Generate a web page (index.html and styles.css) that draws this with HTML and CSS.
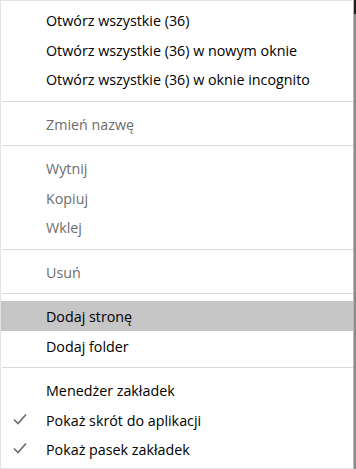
FILE: index.html
```html
<!DOCTYPE html>
<html lang="pl">

<head>
    <meta charset="UTF-8">
    <meta name="viewport" content="width=device-width, initial-scale=1.0">
    <title>Menu zakładek</title>
    <link rel="stylesheet" href="styles.css">
</head>

<body>
    <div class="menu">
        <div class="item">Otwórz wszystkie (36)</div>
        <div class="item">Otwórz wszystkie (36) w nowym oknie</div>
        <div class="item">Otwórz wszystkie (36) w oknie incognito</div>
        <div class="sep"></div>
        <div class="item disabled">Zmień nazwę</div>
        <div class="sep"></div>
        <div class="item disabled">Wytnij</div>
        <div class="item disabled">Kopiuj</div>
        <div class="item disabled">Wklej</div>
        <div class="sep"></div>
        <div class="item disabled">Usuń</div>
        <div class="sep"></div>
        <div class="item active">Dodaj stronę</div>
        <div class="item">Dodaj folder</div>
        <div class="sep"></div>
        <div class="item">Menedżer zakładek</div>
        <div class="item">
            <svg class="check" width="14" height="12" viewBox="0 0 14 12">
                <polyline points="1,6.5 5,10.5 13,1.5" />
            </svg>
            Pokaż skrót do aplikacji
        </div>
        <div class="item">
            <svg class="check" width="14" height="12" viewBox="0 0 14 12">
                <polyline points="1,6.5 5,10.5 13,1.5" />
            </svg>
            Pokaż pasek zakładek
        </div>
    </div>
</body>

</html>
```

FILE: styles.css
```css
body {
    margin: 0;
    background: linear-gradient(#1e1e1e 0 14px, #8c8c8c 14px);
    font-family: "Segoe UI", "Open Sans", sans-serif;
}

.menu {
    width: 352px;
    padding: 4px 0;
    background-color: white;
    border: 1px solid #e3e3e3;
    border-right-color: #b9b9b9;
}

.item {
    position: relative;
    height: 29.5px;
    display: flex;
    align-items: center;
    padding-left: 45px;
    padding-top: 2px;
    box-sizing: border-box;
    font-size: 14.3px;
    color: #000;
    white-space: nowrap;
}

.item.disabled {
    color: #6d6d6d;
}

.item.active {
    background-color: #c6c6c6;
}

.check {
    position: absolute;
    left: 12px;
    top: 8px;
    fill: none;
    stroke: #6a6a6a;
    stroke-width: 1.6;
}

.sep {
    height: 1px;
    margin: 7px 0 7px 1px;
    background-color: #d9d9d9;
}
```
